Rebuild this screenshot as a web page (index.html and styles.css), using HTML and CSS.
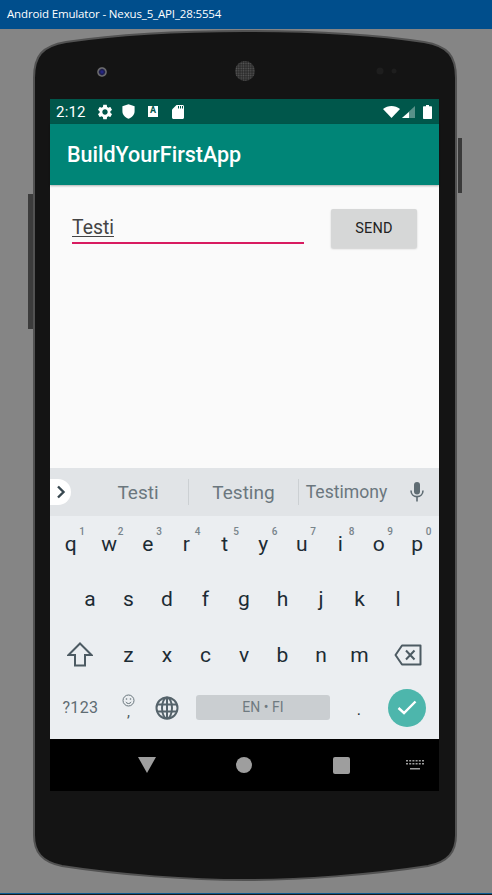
FILE: index.html
```html
<!DOCTYPE html>
<html lang="en">
<head>
<meta charset="utf-8">
<title>Android Emulator - Nexus_5_API_28:5554</title>
<link rel="stylesheet" href="styles.css">
</head>
<body>
<header class="titlebar">Android Emulator - Nexus_5_API_28:5554</header>
<main class="stage">
  <svg class="frame" width="492" height="864" viewBox="0 29 492 864" aria-hidden="true">
    <defs>
      <pattern id="mesh" width="2.4" height="2.4" patternUnits="userSpaceOnUse">
        <circle cx="1.2" cy="1.2" r="0.75" fill="#5c5c5c"/>
      </pattern>
      <radialGradient id="lens">
        <stop offset="0" stop-color="#2a2a9a"/>
        <stop offset="0.5" stop-color="#1c1c48"/>
        <stop offset="0.8" stop-color="#777"/>
        <stop offset="1" stop-color="#444"/>
      </radialGradient>
    </defs>
    <rect x="28" y="194" width="6" height="135" fill="#3c3c3c"/>
    <rect x="458" y="138" width="4" height="55" fill="#3a3a3a"/>
    <path class="shell" d="M34 78 C34 56 42 46 66 42 C120 34 190 31 245 31 C300 31 370 34 424 42 C448 46 456 56 456 78 L456 835 C456 852 448 862 428 866 C370 875 300 880 245 880 C190 880 120 875 62 866 C42 862 34 852 34 835 Z"/>
    <circle cx="102" cy="72" r="5" fill="url(#lens)"/>
    <circle cx="245" cy="71" r="10" fill="#2a2a2a"/>
    <circle cx="245" cy="71" r="10" fill="url(#mesh)"/>
    <circle cx="380" cy="71" r="3.5" fill="#1e1e1e"/>
    <circle cx="394" cy="71" r="2.5" fill="#1e1e1e"/>
  </svg>

  <div class="screen">
    <div class="statusbar">
      <span class="clock">2:12</span>
      <svg class="st-gear" width="18" height="18" viewBox="0 0 24 24"><path fill="#fff" d="M19.14 12.94c.04-.3.06-.61.06-.94 0-.32-.02-.64-.07-.94l2.03-1.58c.18-.14.23-.41.12-.61l-1.92-3.32c-.12-.22-.37-.29-.59-.22l-2.39.96c-.5-.38-1.03-.7-1.62-.94l-.36-2.54c-.04-.24-.24-.41-.48-.41h-3.84c-.24 0-.43.17-.47.41l-.36 2.54c-.59.24-1.13.57-1.62.94l-2.39-.96c-.22-.08-.47 0-.59.22L2.74 8.87c-.12.21-.08.47.12.61l2.03 1.58c-.05.3-.09.63-.09.94s.02.64.07.94l-2.03 1.58c-.18.14-.23.41-.12.61l1.92 3.32c.12.22.37.29.59.22l2.39-.96c.5.38 1.03.7 1.62.94l.36 2.54c.05.24.24.41.48.41h3.84c.24 0 .44-.17.47-.41l.36-2.54c.59-.24 1.13-.56 1.62-.94l2.39.96c.22.08.47 0 .59-.22l1.92-3.32c.12-.22.07-.47-.12-.61l-2.01-1.58zM12 15.6c-1.98 0-3.6-1.62-3.6-3.6s1.62-3.6 3.6-3.6 3.6 1.62 3.6 3.6-1.62 3.6-3.6 3.6z"/></svg>
      <svg class="st-shield" width="13" height="15" viewBox="0 0 13 15"><path fill="#fff" d="M6.5 0.2 L12.6 2.2 V7 C12.6 10.8 10 13.6 6.5 14.8 C3 13.6 0.4 10.8 0.4 7 V2.2 Z"/></svg>
      <span class="st-a">A</span>
      <svg class="st-sd" width="12" height="14" viewBox="0 0 12 14"><path fill="#fff" d="M4.500 0 H10.500 C11.300 0 12 .7 12 1.500 V12.500 C12 13.300 11.300 14 10.500 14 H1.500 C.7 14 0 13.300 0 12.500 V4.500 Z"/><path fill="#00574b" d="M6 1h1v2.400H6zM8 1h1v2.400H8zM10 1h1v2.400h-1z"/></svg>
      <span class="st-spacer"></span>
      <svg class="st-wifi" width="17" height="12" viewBox="0 0 16 12" preserveAspectRatio="none"><path fill="#fff" d="M0 3 C4.500 -1 11.500 -1 16 3 L8 12 Z"/></svg>
      <svg class="st-signal" width="13" height="12" viewBox="0 0 13 13" preserveAspectRatio="none"><path fill="#fff" fill-opacity=".35" d="M13 0 V13 H0 Z"/><path fill="#fff" d="M7 6.500 V13 H0 Z"/></svg>
      <svg class="st-batt" width="9" height="14" viewBox="0 0 9 14"><path fill="#fff" d="M3 0 H6 V1.300 H8 C8.600 1.300 9 1.700 9 2.300 V13 C9 13.600 8.600 14 8 14 H1 C.4 14 0 13.600 0 13 V2.300 C0 1.700 .4 1.300 1 1.300 H3 Z"/></svg>
    </div>

    <div class="appbar"><h1 class="apptitle">BuildYourFirstApp</h1></div>

    <section class="content">
      <div class="field"><span class="composing">Testi</span></div>
      <button class="send" type="button">SEND</button>
    </section>

    <section class="keyboard">
      <div class="suggestions">
        <span class="chevron"><svg width="10" height="14" viewBox="0 0 10 14"><path fill="none" stroke="#37474f" stroke-width="2.4" d="M2 1.500 L7.500 7 L2 12.500"/></svg></span>
        <span class="sug sug-a">Testi</span>
        <span class="divider"></span>
        <span class="sug sug-b">Testing</span>
        <span class="divider"></span>
        <span class="sug sug-c">Testimony</span>
        <span class="mic"><svg width="14" height="20" viewBox="0 0 14 20"><rect x="4" y="0" width="6" height="12.500" rx="3" fill="#5f6c73"/><path fill="none" stroke="#5f6c73" stroke-width="1.600" d="M1 8.500 C1 12.200 3.600 14.600 7 14.600 C10.400 14.600 13 12.200 13 8.500"/><rect x="6.200" y="14.500" width="1.600" height="5" fill="#5f6c73"/></svg></span>
      </div>

      <div class="keys">
        <div class="row">
          <span class="key">q<i class="hint">1</i></span><span class="key">w<i class="hint">2</i></span><span class="key">e<i class="hint">3</i></span><span class="key">r<i class="hint">4</i></span><span class="key">t<i class="hint">5</i></span><span class="key">y<i class="hint">6</i></span><span class="key">u<i class="hint">7</i></span><span class="key">i<i class="hint">8</i></span><span class="key">o<i class="hint">9</i></span><span class="key">p<i class="hint">0</i></span>
        </div>
        <div class="row row-home">
          <span class="key">a</span><span class="key">s</span><span class="key">d</span><span class="key">f</span><span class="key">g</span><span class="key">h</span><span class="key">j</span><span class="key">k</span><span class="key">l</span>
        </div>
        <div class="row">
          <span class="key wide"><svg width="26" height="25" viewBox="0 0 26 25"><path fill="none" stroke="#4d5b63" stroke-width="2" d="M13 1.500 L24.500 13 H18 V23.500 H8 V13 H1.500 Z"/></svg></span>
          <span class="key">z</span><span class="key">x</span><span class="key">c</span><span class="key">v</span><span class="key">b</span><span class="key">n</span><span class="key">m</span>
          <span class="key wide"><svg width="28" height="22" viewBox="0 0 28 22"><path fill="none" stroke="#4d5b63" stroke-width="2" stroke-linejoin="round" d="M8 1.500 H26.500 V20.500 H8 L1.500 11 Z"/><path fill="none" stroke="#4d5b63" stroke-width="2" d="M12 6.500 L20.500 15.500 M20.500 6.500 L12 15.500"/></svg></span>
        </div>
        <div class="row row-bottom">
          <span class="key wide symbols">?123</span>
          <span class="key emoji"><svg width="13" height="13" viewBox="0 0 13 13"><circle cx="6.500" cy="6.500" r="5.500" fill="none" stroke="#68757c" stroke-width="1"/><circle cx="4.500" cy="5" r=".8" fill="#68757c"/><circle cx="8.500" cy="5" r=".8" fill="#68757c"/><path fill="none" stroke="#68757c" d="M3.800 8 C5 10 8 10 9.200 8"/></svg><span class="comma">,</span></span>
          <span class="key"><svg width="24" height="24" viewBox="0 0 24 24"><g fill="none" stroke="#55636b" stroke-width="2"><circle cx="12" cy="12" r="10.500"/><ellipse cx="12" cy="12" rx="5" ry="10.500"/><path d="M12 1.500 V22.500 M2.200 8.500 H21.800 M2.200 15.500 H21.800"/></g></svg></span>
          <span class="key space"><span class="spacebar">EN • FI</span></span>
          <span class="key period">.</span>
          <span class="key wide"><span class="enter"><svg width="20" height="15" viewBox="0 0 20 15"><path fill="none" stroke="#fff" stroke-width="2.400" d="M1.500 8 L7 13 L18.500 1.500"/></svg></span></span>
        </div>
      </div>
    </section>

    <nav class="navbar">
      <svg class="nav-back" width="18" height="16" viewBox="0 0 18 16"><path fill="#9e9e9e" d="M0 0 H18 L9 16 Z"/></svg>
      <svg class="nav-home" width="16" height="16" viewBox="0 0 16 16"><circle cx="8" cy="8" r="8" fill="#9e9e9e"/></svg>
      <svg class="nav-recent" width="17" height="17" viewBox="0 0 17 17"><rect width="17" height="17" rx="2" fill="#9e9e9e"/></svg>
      <svg class="nav-kbd" width="18" height="10" viewBox="0 0 18 10"><g fill="#9e9e9e"><path d="M0 0h2v1.600H0zM3.200 0h2v1.600h-2zM6.400 0h2v1.600h-2zM9.600 0h2v1.600h-2zM12.800 0h2v1.600h-2zM16 0h2v1.600h-2zM0 3h2v1.600H0zM3.200 3h2v1.600h-2zM6.400 3h2v1.600h-2zM9.600 3h2v1.600h-2zM12.800 3h2v1.600h-2zM16 3h2v1.600h-2zM4 8h10v1.600H4z"/></g></svg>
    </nav>
  </div>
</main>
<div class="taskline"></div>
</body>
</html>
```

FILE: styles.css
```css
* { box-sizing: border-box; }

html, body {
  margin: 0;
  padding: 0;
  height: 100%;
  overflow: hidden;
}

body {
  display: flex;
  flex-direction: column;
  background: #858585;
  font-family: Roboto, "Liberation Sans", sans-serif;
}

.titlebar {
  flex: 0 0 29px;
  height: 29px;
  padding-left: 7px;
  background: #004e8c;
  color: #fff;
  font: 11.5px/28px "Open Sans", sans-serif;
  letter-spacing: -.15px;
  white-space: nowrap;
}

.stage {
  position: relative;
  flex: 0 0 864px;
  padding: 70px 0 0 50px;
}

.frame {
  position: absolute;
  left: 0;
  top: 0;
}

.shell {
  fill: #141414;
  stroke: #525252;
  stroke-width: 2;
}

.taskline {
  flex: 1;
  border-top: 1px solid #0e5c94;
  background: #1a1a1a;
}

.screen {
  position: relative;
  display: flex;
  flex-direction: column;
  width: 389px;
  height: 692px;
}

/* status bar */
.statusbar {
  flex: 0 0 25px;
  display: flex;
  align-items: center;
  padding-left: 6px;
  background: #00574b;
  color: #fff;
}

.clock {
  width: 40px;
  font-size: 15px;
  letter-spacing: .2px;
}

.st-shield { margin-left: 8px; }

.st-a {
  display: block;
  width: 10px;
  height: 11px;
  margin-left: 13px;
  background: #fff;
  color: #00574b;
  font-size: 9px;
  font-weight: 700;
  line-height: 9px;
  text-align: center;
}

.st-sd { margin-left: 14px; }
.st-spacer { flex: 1; }
.st-signal { margin-left: 2px; }
.st-batt { margin: 0 7px 0 8px; }

/* app bar */
.appbar {
  flex: 0 0 61px;
  display: flex;
  align-items: center;
  padding-left: 17px;
  background: #008577;
  box-shadow: 0 1px 2px rgba(0, 0, 0, .3);
  z-index: 1;
}

.apptitle {
  margin: 0;
  color: #fff;
  font-size: 21.5px;
  font-weight: 500;
}

/* content */
.content {
  flex: 0 0 283px;
  display: flex;
  align-items: flex-start;
  padding: 24px 0 0 22px;
  background: #fafafa;
}

.field {
  width: 232px;
  height: 35px;
  border-bottom: 2px solid #d81b60;
  color: #444;
  font-size: 19.4px;
  line-height: 37px;
}

.composing {
  text-decoration: underline;
  text-decoration-thickness: 1px;
  text-underline-offset: 2px;
}

.send {
  width: 86px;
  height: 39px;
  margin: 0 0 0 27px;
  padding: 0;
  border: 0;
  border-radius: 2px;
  background: #d6d7d7;
  box-shadow: 0 1px 2px rgba(0, 0, 0, .18);
  color: #222;
  font: 400 14.5px Roboto, sans-serif;
  letter-spacing: .2px;
}

/* keyboard */
.keyboard {
  flex: 0 0 271px;
  display: flex;
  flex-direction: column;
  background: #ebeef1;
}

.suggestions {
  flex: 0 0 48px;
  display: flex;
  align-items: center;
  background: #e1e4e7;
}

.chevron {
  flex: 0 0 21px;
  height: 26px;
  display: flex;
  align-items: center;
  padding-left: 6px;
  border-radius: 0 13px 13px 0;
  background: #fff;
}

.sug {
  color: #6b777e;
  font-size: 19px;
  text-align: center;
  white-space: nowrap;
}

.sug-a { width: 117px; padding-left: 17px; }
.sug-b { width: 109px; }
.sug-c { width: 95px; font-size: 17.6px; }

.divider {
  flex: 0 0 1px;
  height: 26px;
  background: #ccd0d3;
}

.mic {
  flex: 1;
  display: flex;
  justify-content: center;
  padding-left: 1px;
}

.keys {
  flex: 1;
  display: flex;
  flex-direction: column;
  padding: 0 2px 0 1.5px;
}

.row {
  flex: 0 0 55.5px;
  display: flex;
}

.row-home { padding-left: 19.25px; }
.row-bottom { flex: 0 0 50px; }

.key {
  position: relative;
  flex: 0 0 38.5px;
  display: flex;
  align-items: center;
  justify-content: center;
  color: #1c2b34;
  font-size: 21px;
}

.key.wide { flex: 0 0 57.75px; }

.hint {
  position: absolute;
  top: 10px;
  right: 5px;
  color: #78848b;
  font-size: 10px;
  font-weight: 500;
  font-style: normal;
  line-height: 12px;
}

.symbols {
  color: #5f6c73;
  font-size: 16px;
  letter-spacing: .3px;
}

.emoji {
  flex-direction: column;
  padding-bottom: 3px;
}

.comma {
  height: 12px;
  color: #4d5b63;
  font-size: 15px;
  line-height: 10px;
}

.key.space {
  flex: 0 0 153.25px;
}

.spacebar {
  width: 134px;
  height: 25px;
  border-radius: 3px;
  background: #caced1;
  color: #6f7a80;
  font-size: 14px;
  line-height: 25px;
  text-align: center;
}

.period { padding-top: 4px; font-size: 16px; }

.enter {
  width: 38px;
  height: 38px;
  display: flex;
  align-items: center;
  justify-content: center;
  border-radius: 50%;
  background: #4db6ac;
}

/* nav bar */
.navbar {
  flex: 1;
  display: flex;
  align-items: center;
  padding-left: 88px;
  background: #000;
}

.nav-home { margin-left: 80px; }
.nav-recent { margin-left: 81px; }
.nav-kbd { margin-left: 56px; }
```
